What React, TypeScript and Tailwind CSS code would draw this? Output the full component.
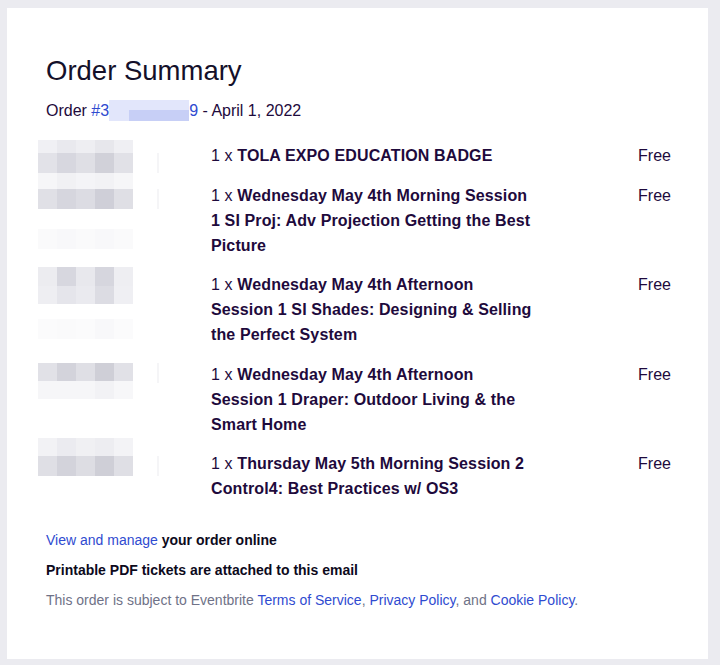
// item names, broken where the email breaks them
const items: string[][] = [
  ['TOLA EXPO EDUCATION BADGE'],
  ['Wednesday May 4th Morning Session', '1 SI Proj: Adv Projection Getting the Best', 'Picture'],
  ['Wednesday May 4th Afternoon', 'Session 1 SI Shades: Designing & Selling', 'the Perfect System'],
  ['Wednesday May 4th Afternoon', 'Session 1 Draper: Outdoor Living & the', 'Smart Home'],
  ['Thursday May 5th Morning Session 2', 'Control4: Best Practices w/ OS3'],
];

// pixelated (blurred) thumbnails: [top, height, colours per block]
const mosaic: [number, number, string[]][] = [
  [0, 13, ['#f0f0f4', '#e9e9ee', '#eeeef2', '#e7e7ec', '#efeff3']],
  [13, 20, ['#e2e2e8', '#d7d7df', '#dfdfe5', '#d1d1d9', '#e1e1e7']],
  [33, 16, ['#f6f6f8', '#f1f1f4', '#f4f4f7', '#f2f2f5', '#f6f6f8']],
  [49, 20, ['#e0e0e6', '#d6d6de', '#dcdce3', '#cfcfd8', '#dfdfe5']],
  [89, 20, ['#fafafb', '#f8f8fa', '#fafafb', '#f8f8fa', '#fafafb']],
  [127, 19, ['#ececf0', '#d7d7df', '#e8e8ed', '#d6d6de', '#eeeef2']],
  [146, 18, ['#eeeef2', '#e5e5eb', '#eaeaef', '#dcdce3', '#efeff3']],
  [179, 20, ['#fbfbfc', '#fafafb', '#fbfbfc', '#f8f8fa', '#fbfbfc']],
  [223, 18, ['#e1e1e7', '#d3d3db', '#dfdfe5', '#cfcfd7', '#e1e1e7']],
  [241, 18, ['#f6f6f8', '#f6f6f8', '#f6f6f8', '#f2f2f5', '#f7f7f9']],
  [298, 18, ['#f2f2f5', '#ebebf0', '#f0f0f3', '#ededf1', '#f3f3f6']],
  [316, 20, ['#dfdfe5', '#d3d3db', '#dddde3', '#cfcfd7', '#dfdfe5']],
];

function Thumbs() {
  return (
    <svg width="125" height="336" viewBox="0 0 125 336" className="-ml-[8px] -mt-[3px] block">
      {mosaic.map(([y, h, cols], r) =>
        cols.map((c, i) => <rect key={`${r}-${i}`} x={i * 19} y={y} width="19" height={h} fill={c} />)
      )}
      {[13, 49, 223, 316].map((y) => (
        <rect key={y} x="119" y={y} width="2" height="20" fill="#f5f5f7" />
      ))}
    </svg>
  );
}

export default function App() {
  return (
    <div className="min-h-[665px] bg-[#ebebf0] pt-[8px] pl-[7px] pr-[12px] font-['Liberation_Sans',Arial,sans-serif]">
      <div className="h-[651px] bg-white px-[39px] pt-[46px] pr-[37px] text-[#1e0a3c]">
        <h1 className="text-[27.5px] leading-[34px] text-[#14102a]">Order Summary</h1>
        <p className="mt-[11px] text-[16px] leading-[24px]">
          Order <span className="text-[#2f4bd0]">#3</span>
          <span className="relative inline-block h-[21px] w-[80px] align-middle -mt-[2px] bg-[#e2e6fb]">
            <span className="absolute left-[20px] right-0 bottom-0 h-[11px] bg-[#c7cff6]" />
          </span>
          <span className="text-[#2f4bd0]">9</span> - April 1, 2022
        </p>

        <div className="mt-[20px] flex">
          <div className="w-[165px] shrink-0">
            <Thumbs />
          </div>
          <div className="flex flex-1 flex-col gap-[14.5px]">
            {items.map((lines, i) => (
              <div key={i} className="flex items-start text-[16px] leading-[25px]">
                <p className="whitespace-nowrap tracking-[0.12px]">
                  {lines.map((l, j) => (
                    <span key={j} className="block">
                      {j === 0 && <span>1 x </span>}
                      <span className="font-bold">{l}</span>
                    </span>
                  ))}
                </p>
                <p className="ml-auto">Free</p>
              </div>
            ))}
          </div>
        </div>

        <div className="mt-[29px] flex flex-col gap-[10px] text-[14px] leading-[20px]">
          <p className="font-bold text-[#0d0a1c]">
            <a className="font-normal text-[#2f4bd0]">View and manage</a> your order online
          </p>
          <p className="font-bold text-[#0d0a1c]">Printable PDF tickets are attached to this email</p>
          <p className="text-[#6f7287]">
            This order is subject to Eventbrite <a className="text-[#2f4bd0]">Terms of Service</a>,{' '}
            <a className="text-[#2f4bd0]">Privacy Policy</a>, and{' '}
            <a className="text-[#2f4bd0]">Cookie Policy</a>.
          </p>
        </div>
      </div>
    </div>
  );
}
